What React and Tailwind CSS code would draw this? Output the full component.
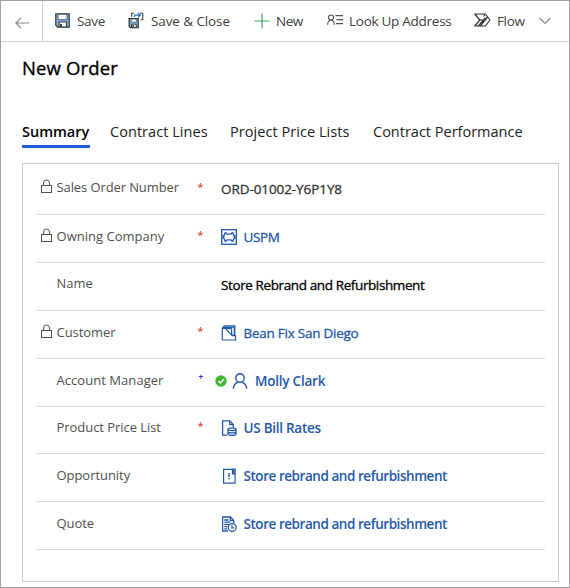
import React from "react";

function Svg({ children, className, size = 16, stroke = "#2458ad", sw = 1.2 }) {
  return (
    <svg className={`shrink-0 ${className || ""}`} width={size} height={size} viewBox={`0 0 ${size} ${size}`} fill="none" stroke={stroke} strokeWidth={sw}>
      {children}
    </svg>
  );
}

const LockIcon = () => (
  <svg className="shrink-0" width="13" height="15" viewBox="0 0 13 15" fill="none" stroke="#505050" strokeWidth="1">
    <rect x="1.500" y="6.500" width="10" height="7" />
    <path d="M3.500 6.500V4a3 3 0 0 1 6 0v2.500" />
  </svg>
);

const CompanyIcon = () => (
  <Svg sw={1.3}>
    <rect x="0.7" y="0.7" width="14.6" height="14.6" />
    <path d="M4.800 3.600l1.200 1.500h4l1.200-1.500 1 .6.300 1.900 1.400.4v1L13 8l.9.500v1l-1.400.4-.3 1.900-1 .6-1.200-1.500H6l-1.200 1.500-1-.6-.3-1.900-1.400-.4v-1L3 8l-.9-.5v-1l1.400-.4.3-1.900z" strokeWidth="1.300" />
  </Svg>
);

const CustomerIcon = () => (
  <Svg>
    <path d="M1.300 15V3.400L3.300.8h10.500v9" />
    <path d="M1.300 3.400h9.200M2 2.100h11" />
    <path d="M1.300 15h13.200v-4.300h-3.200l-7-7.300" />
    <path d="M10.600 3.200v6.600l2.700.4V1.500" />
  </Svg>
);

const PersonIcon = () => (
  <Svg sw={1.4}>
    <circle cx="8" cy="5" r="4.200" />
    <path d="M1.200 15.800c.3-3.500 2.600-5.800 4.900-6.900M14.800 15.800c-.3-3.500-2.600-5.800-4.900-6.900" />
  </Svg>
);

const PriceIcon = () => (
  <Svg sw={1.300}>
    <path d="M6 15.200H1.600V.8h7.200l3.500 3.600v3M8.700.8v3.700h3.600" />
    <ellipse cx="11" cy="9.200" rx="4" ry="1.400" />
    <path d="M7 9.200v2.300c0 .8 1.800 1.400 4 1.400s4-.6 4-1.400V9.200M7 11.500V14c0 .8 1.800 1.400 4 1.400s4-.6 4-1.400v-2.500" />
  </Svg>
);

const OpportunityIcon = () => (
  <Svg>
    <path d="M11.500 1.300H2.600v13.900h11.500V6" />
    <path d="M11.500 1v4.800h2.600V1zM12.700 1v4.500" />
    <path d="M8 5v4M8 10v1.200" strokeWidth="1.500" />
  </Svg>
);

const QuoteIcon = () => (
  <Svg sw={1.300}>
    <path d="M7 15H1.600V1h7.800l3.300 3.400v3M9.300 1v3.500h3.400" />
    <path d="M3.300 4h4.200M3.300 6.200h6M3.300 8.400h4.500M3.300 10.600h3M3.300 12.800h3" />
    <circle cx="11.200" cy="11.500" r="3.900" fill="white" />
    <path d="M11 9.200v2.600h2" />
  </Svg>
);

const CheckIcon = () => (
  <svg className="shrink-0" width="12" height="12" viewBox="0 0 12 12">
    <circle cx="6" cy="6" r="5.700" fill="#40b834" />
    <path d="M3.400 6l2 2 3.400-3.700" fill="none" stroke="white" strokeWidth="1.500" />
  </svg>
);

const SaveIcon = () => (
  <svg className="mb-px shrink-0" width="15" height="15" viewBox="0 0 15 15">
    <path d="M.8.8h13.400v13.400H2.800l-2-2z" fill="#83b9e8" stroke="#3a3f46" strokeWidth="1.300" />
    <path d="M3 1.300h9v5.400H3z" fill="white" stroke="#3a3f46" strokeWidth=".8" />
    <path d="M4 9h7.500v5H4z" fill="white" stroke="#3a3f46" strokeWidth="1.200" />
    <path d="M5 11h2v3H5z" fill="#3a3f46" />
  </svg>
);

const SaveCloseIcon = () => (
  <svg className="mb-px shrink-0" width="16" height="17" viewBox="0 0 16 17" fill="none">
    <path d="M1.200 6.700h9v9H2.500l-1.300-1.300z" fill="#83b9e8" stroke="#34383e" strokeWidth="1.300" />
    <path d="M3.300 7.100h5v3h-5z" fill="white" stroke="#34383e" strokeWidth=".6" />
    <path d="M3.500 12.200h4.700v3.400H3.500z" fill="white" stroke="#34383e" />
    <path d="M4.300 13h1.500v2.500H4.300z" fill="#34383e" />
    <path d="M6 1.200H3.700V5M12 1.200h2.800v6.500h-2.200" stroke="#444" strokeWidth="1.100" />
    <path d="M6.500 5V3.200H12M10 1l2.200 2.200L10 5.400" stroke="#2372c4" strokeWidth="1.200" />
  </svg>
);

const PlusIcon = () => (
  <svg className="mb-px shrink-0" width="16" height="16" viewBox="0 0 16 16">
    <path d="M8 .5v15M.5 8h15" stroke="#45ae66" strokeWidth="1.200" />
  </svg>
);

const AddressIcon = () => (
  <svg className="mb-[3px] shrink-0" width="16" height="12" viewBox="0 0 16 12" fill="none" stroke="#505050" strokeWidth="1.100">
    <circle cx="4" cy="3.500" r="2.500" />
    <path d="M.6 10.700C.8 8 2.200 6.200 4 6.200s3.200 1.800 3.400 4.500M8.500 1.600H16M9.500 5.600H16M9 9.600h7" />
  </svg>
);

const FlowIcon = () => (
  <svg className="mb-[2px] shrink-0" width="17" height="14" viewBox="0 0 17 14" fill="none" stroke="#333" strokeWidth="1.200" strokeLinejoin="round">
    <path d="M.8 1h10.500l4.700 6-4.700 6H.8L5.800 7z" />
    <path d="M5.800 7h3.700l1.800-2.400M11.300 1L9.500 3.500M13.600 4L6.300 13M9.500 7L4.300 13" />
  </svg>
);

const commands = [
  ["Save", SaveIcon, "w-[73px]", "w-[22px]", "tracking-[-0.3px]"],
  ["Save & Close", SaveCloseIcon, "w-[126px]", "w-[23px]", "tracking-[-0.1px]"],
  ["New", PlusIcon, "w-[73px]", "w-[22px]", "tracking-[-0.5px]"],
  ["Look Up Address", AddressIcon, "w-[147px]", "w-[22px]", "tracking-[-0.27px]"],
  ["Flow", FlowIcon, "w-[66px]", "w-[23px]", "tracking-[-0.35px]"],
];

const medium = "[-webkit-text-stroke:0.3px_currentColor]";

const fields = [
  { label: "Sales Order Number", lock: true, mark: "*", value: "ORD-01002-Y6P1Y8", h: "h-[51px]", drop: "pb-[17px]", labelCls: "tracking-[-0.1px]", cls: `text-[#333] tracking-[-0.08px] ${medium}` },
  { label: "Owning Company", lock: true, mark: "*", value: "USPM", icon: CompanyIcon, labelCls: "tracking-[0.02px]", cls: `text-[#2458ad] tracking-[-0.4px] ${medium}` },
  { label: "Name", value: "Store Rebrand and Refurbishment", drop: "pb-[17px]", cls: `text-black tracking-[-0.39px] ${medium}` },
  { label: "Customer", lock: true, mark: "*", value: "Bean Fix San Diego", icon: CustomerIcon, cls: `text-[#2458ad] tracking-[-0.25px] ${medium}` },
  { label: "Account Manager", mark: "+", value: "Molly Clark", icon: PersonIcon, check: true, labelCls: "tracking-[0.05px]", cls: "text-[#2458ad] tracking-[-0.22px] font-semibold" },
  { label: "Product Price List", mark: "*", value: "US Bill Rates", icon: PriceIcon, h: "h-[47px]", cls: "text-[#2458ad] tracking-[-0.27px] font-semibold" },
  { label: "Opportunity", value: "Store rebrand and refurbishment", icon: OpportunityIcon, cls: "text-[#2458ad] tracking-[-0.45px] font-semibold" },
  { label: "Quote", value: "Store rebrand and refurbishment", icon: QuoteIcon, cls: "text-[#2458ad] tracking-[-0.45px] font-semibold" },
];

function Field({ label, lock, mark, value, icon: Icon, check, h, drop = "pb-[16px]", labelCls = "tracking-[-0.05px]", cls }) {
  return (
    <div className={`flex items-end border-b border-[#d8d8d8] ${h || "h-[48px]"}`}>
      <div className={`flex w-[160px] items-center pl-1 ${drop}`}>
        <div className="flex w-[16.500px] -translate-y-px">{lock && <LockIcon />}</div>
        <span className={`text-[13px] leading-5 text-[#505050] ${labelCls}`}>{label}</span>
      </div>
      <div className={`w-[18px] pb-[17px] pl-[1.5px] text-[11px] leading-5 ${mark === "+" ? "text-[#3a22e8]" : "text-[#e81123]"}`}>
        {mark === "+" ? <span className="block translate-x-px -translate-y-0.5 text-[8px] leading-5 font-bold">+</span> : mark}
      </div>
      <div className={`flex items-center pb-[15px] ${check ? "" : "pl-[7px]"}`}>
        {check && <div className="mr-[5px] ml-px flex"><CheckIcon /></div>}
        {Icon && <div className={`flex ${check ? "mr-[7px]" : "mr-[6.5px]"}`}><Icon /></div>}
        <span className={`text-[13.5px] leading-5 ${cls}`}>{value}</span>
      </div>
    </div>
  );
}

export default function App() {
  return (
    <div className="flex h-[588px] w-[570px] flex-col overflow-hidden border border-[#a0a0a0] bg-white font-['Open_Sans','Noto_Sans',sans-serif] whitespace-nowrap">
      <header className="flex h-[41px] shrink-0 items-center border-b border-[#d0d0d0]">
        <div className="mr-[12px] flex h-full w-[42px] items-center justify-center border-r border-[#d0d0d0] pt-[3px]">
          <svg width="14" height="12" viewBox="0 0 14 12" fill="none" stroke="#888" strokeWidth="1.100">
            <path d="M14 6H.8M6 .8L.8 6 6 11.200" />
          </svg>
        </div>
        {commands.map(([label, Icon, box, slot, text]) => (
          <div key={label} className={`flex shrink-0 items-center ${box}`}>
            <div className={`flex shrink-0 ${slot}`}>
              <Icon />
            </div>
            <span className={`pb-px text-[13.5px] leading-5 text-[#404040] ${text}`}>{label}</span>
          </div>
        ))}
        <svg className="-ml-px shrink-0" width="12" height="8" viewBox="0 0 12 8" fill="none" stroke="#888" strokeWidth="1.100">
          <path d="M.5 1L6 6.500 11.500 1" />
        </svg>
      </header>
      <h1 className="mt-[12px] ml-[21px] text-[18.5px] leading-7 tracking-[0.15px] text-black [-webkit-text-stroke:0.35px_currentColor]">New Order</h1>
      <nav className="mt-[38px] ml-[21px] flex h-[28px] gap-[20px] text-[14.5px] leading-6 text-[#222]">
        <span className="h-[28px] w-[68px] rounded-b-[1px] border-b-[3px] border-[#2257d6] font-semibold text-black">Summary</span>
        <span className="w-[100px] tracking-[0.05px]">Contract Lines</span>
        <span className="w-[123px] tracking-[0.05px]">Project Price Lists</span>
        <span>Contract Performance</span>
      </nav>
      <main className="mt-[15px] ml-[21px] h-[419px] w-[537px] border border-[#cccccc] px-[13px]">
        {fields.map((f) => (
          <Field key={f.label} {...f} />
        ))}
      </main>
    </div>
  );
}
